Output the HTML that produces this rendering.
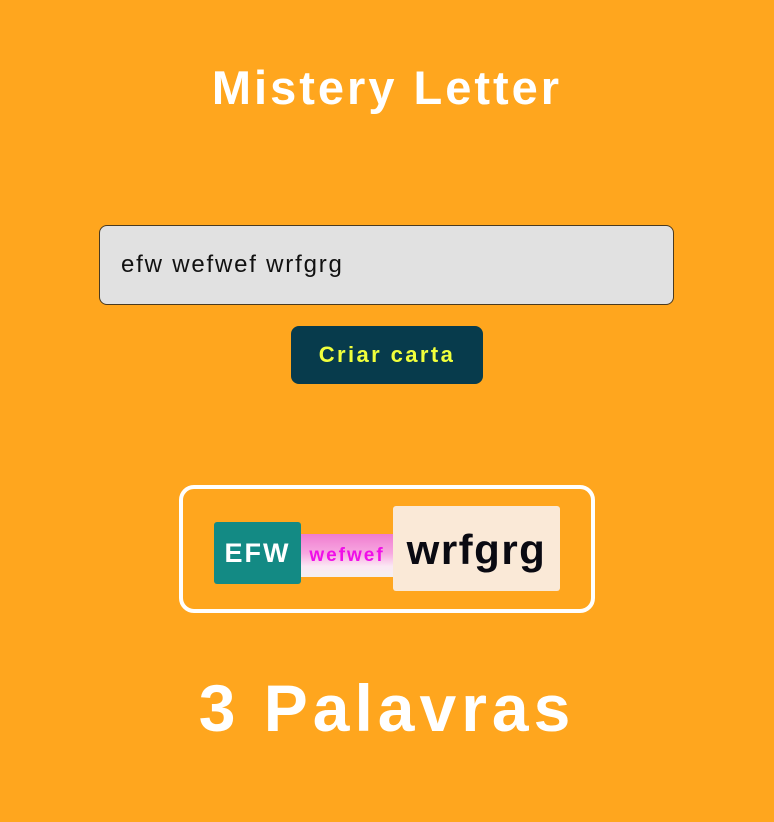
<!DOCTYPE html>
<html><head><meta charset="utf-8"><style>
body{margin:0;width:774px;height:822px;background:#FFA61E;font-family:"Liberation Sans",sans-serif;position:relative;overflow:hidden}
.a{position:absolute;box-sizing:border-box}
h1{position:absolute;top:58px;left:0;width:774px;text-align:center;margin:0;color:#fff;font-size:47px;font-weight:bold;line-height:60px;letter-spacing:3px}
</style></head><body>
<h1>Mistery Letter</h1>
<div class="a" style="left:99px;top:225px;width:575px;height:80px;background:#e1e1e1;border:1.5px solid #4a3a20;border-radius:8px;font-size:24px;color:#111;padding-left:21px;line-height:78px;letter-spacing:1.8px">efw wefwef wrfgrg</div>
<div class="a" style="left:291px;top:326px;width:192px;height:58px;background:#073B4C;border-radius:8px;color:#F0FF3C;font-weight:bold;font-size:22px;text-align:center;line-height:58px;letter-spacing:2.4px">Criar carta</div>
<div class="a" style="left:179px;top:485px;width:416px;height:128px;border:4px solid #fff;border-radius:15px"></div>
<div class="a" style="left:214px;top:522px;width:87px;height:62px;background:#138A84;border-radius:3px;color:#fff;font-weight:bold;font-size:27px;text-align:center;line-height:62px;letter-spacing:2px">EFW</div>
<div class="a" style="left:301px;top:534px;width:92px;height:43px;background:linear-gradient(180deg,#f07cd0 0%,#f7a8e0 45%,#fbe8f4 75%,#f4f0f2 100%);color:#f00ee8;font-weight:bold;font-size:19px;text-align:center;line-height:43px;letter-spacing:2px">wefwef</div>
<div class="a" style="left:393px;top:506px;width:167px;height:85px;background:#FAE9D7;border-radius:3px;color:#0a0a12;font-weight:bold;font-size:42px;text-align:center;line-height:88px;letter-spacing:1.5px">wrfgrg</div>
<div class="a" style="left:0;top:668px;width:774px;text-align:center;color:#fff;font-weight:bold;font-size:66px;line-height:80px;letter-spacing:5px">3 Palavras</div>
</body></html>
